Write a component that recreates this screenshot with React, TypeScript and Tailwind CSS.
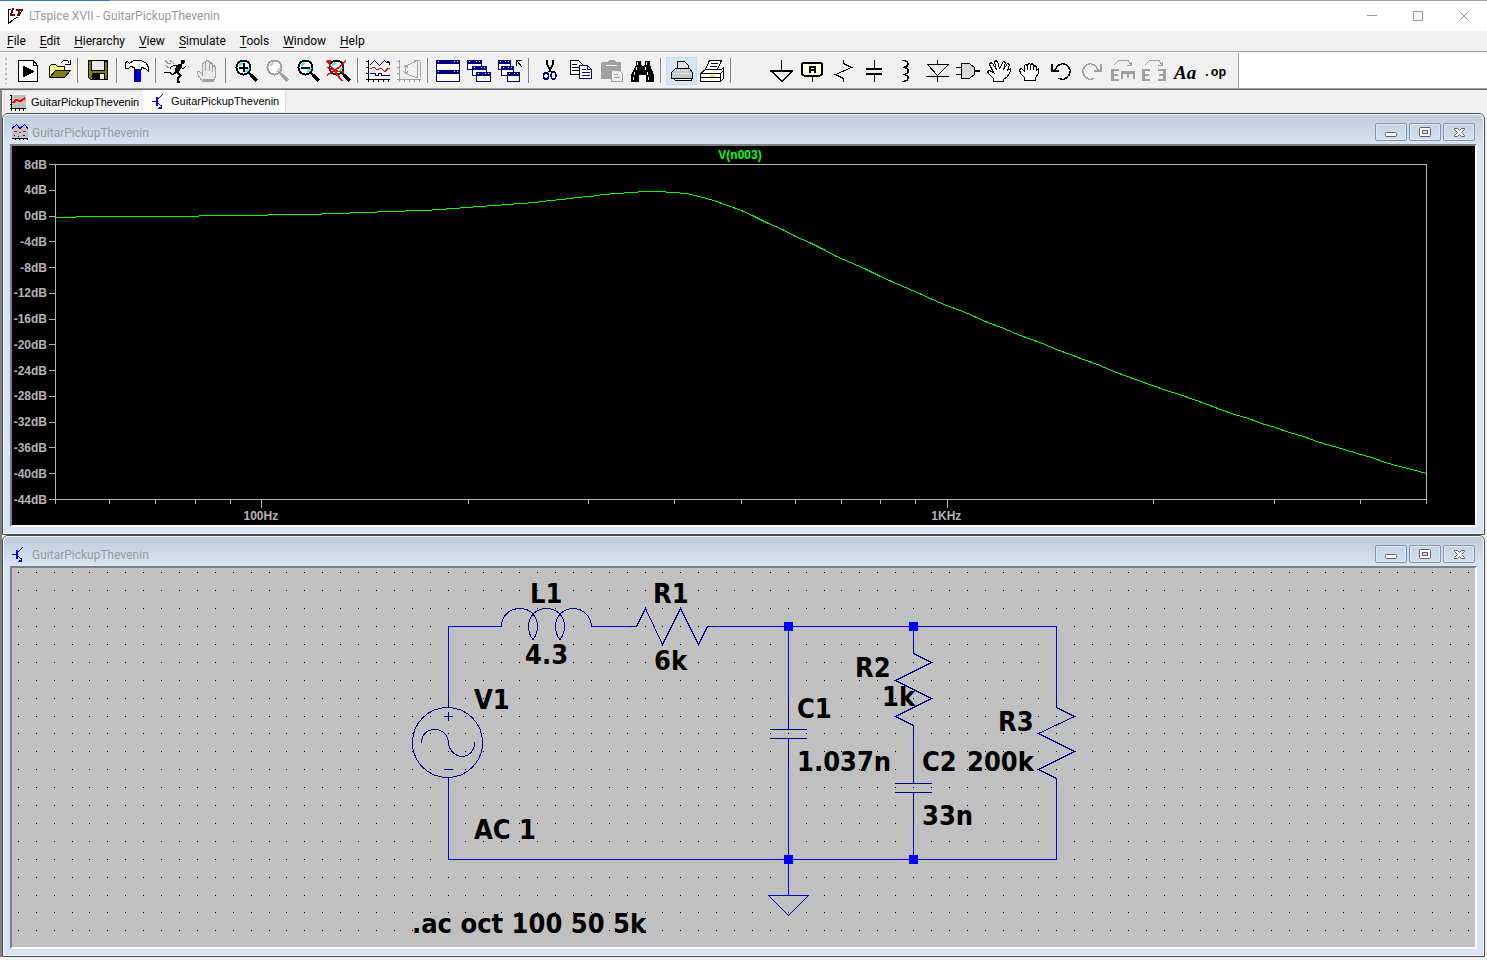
import { Fragment, type ReactNode } from "react";

const UI_FONT = "font-['Roboto','Noto_Sans',sans-serif]";

const MENUS = ["File", "Edit", "Hierarchy", "View", "Simulate", "Tools", "Window", "Help"];

type Tool = { name: string; art: ReactNode; active?: boolean };

const Lens = ({ children, color = "#000", glint = "#00ffff" }: { children?: ReactNode; color?: string; glint?: string }) => (
  <>
    <circle cx="12.5" cy="10.5" r="7" fill="#fff" stroke={color} strokeWidth="2" />
    <path d="M8 9l3-3M15 15l3-4" stroke={glint} strokeWidth="2" />
    <path d="M18 16l3 3" stroke={color} strokeWidth="2" />
    <path d="M20 18l6 6" stroke={color} strokeWidth="4" />
    {children}
  </>
);

const MiniWindow = ({ x, y, w = 15, h = 10 }: { x: number; y: number; w?: number; h?: number }) => (
  <>
    <rect x={x + 0.5} y={y + 0.5} width={w - 1} height={h - 1} fill="#fff" stroke="#000080" />
    <rect x={x} y={y} width={w} height="4" fill="#000080" />
    <path d={`M${x + 2} ${y + 1.5}h1M${x + w - 6} ${y + 1.5}h1M${x + w - 3} ${y + 1.5}h1`} stroke="#fff" />
  </>
);

const fileTools: Tool[][] = [
  [
    {
      name: "Run",
      art: (
        <>
          <path d="M5.5 3.5H20.5L24.5 8.5V24.5H5.5z" fill="#fff" stroke="#000" />
          <path d="M20.5 4V8.5H24" fill="none" stroke="#000" />
          <path d="M10 8.5L21.5 14.5L10 20.5z" />
        </>
      ),
    },
    {
      name: "Open",
      art: (
        <>
          <path d="M5.5 20.5V9.5L7.5 7.5H11.5L13.5 9.5H20.5V13.5" fill="#ffff80" stroke="#000" />
          <path d="M5.5 20.5L11.5 13.5H26.5L20.5 20.5z" fill="#808000" stroke="#000" />
          <path d="M16.5 6.5L19.5 3.5H23.5L25.5 6.5M21 7.5H26.5V3" fill="none" stroke="#000" />
        </>
      ),
    },
  ],
  [
    {
      name: "Save",
      art: (
        <>
          <path d="M5.5 3.5H24.5V22.5H7.5L5.5 20.5z" fill="#808000" stroke="#000" strokeWidth="1" />
          <rect x="9" y="4" width="12" height="9" fill="#e8e8e8" />
          <path d="M8.5 4V13.5H21.5V4M21 4.5h3" fill="none" stroke="#000" />
          <rect x="9" y="16" width="13" height="7" />
          <rect x="17" y="17" width="4" height="5" fill="#f0f0f0" />
        </>
      ),
    },
  ],
  [
    {
      name: "Control Panel",
      art: (
        <>
          <path d="M12 11h7v14h-7z" fill="#0000ff" />
          <path d="M12 11h3v14h-3z" fill="#000080" />
          <path d="M3.5 5.5L5.5 4.5L7.5 6.5L11.5 3.5H19.5L24.5 6.5L26.5 10.5V14.5L23.5 11.5L19.5 10.5V12.5H12.5V10.5L8.5 9.5L6.5 11.5H3.5z" fill="#fff" stroke="#000" />
        </>
      ),
    },
  ],
  [
    {
      name: "Simulate",
      art: (
        <>
          <path d="M20 3h4v3h-1v1h-3z" />
          <path d="M17 7h4v3l-2 3l-1 3h-4v-4z" />
          <path d="M18 8.5H12.500L9.500 10.500V12M20 10.500L22 11.500L25 9.500" fill="none" stroke="#000" />
          <path d="M15 15.500L11.500 17.500L8.500 15.500H3" fill="none" stroke="#000" strokeWidth="1.500" />
          <path d="M15.500 15L19.500 18.500L16.500 22V24.500H19" fill="none" stroke="#000" strokeWidth="2" />
          <path d="M4 3.500L7 6.500L10 7M9 3.500L13 6.500M4 8.500L8 11" fill="none" stroke="#909090" />
        </>
      ),
    },
    {
      name: "Halt",
      art: (
        <>
          <path
            d="M10.5 24.5L5.5 17.5V14.5H7.5L10.5 17.5V6.500L12.500 5.500L13.500 6.500V4.500L15.500 3.500L17.500 4.500V6.500L19.500 5.500L20.500 7.500V9.500L22.500 8.500L23.500 10.500V19.500L21.500 24.500z"
            fill="#e8e8e8"
            stroke="#a0a0a0"
            strokeWidth="1"
          />
          <path d="M13.500 6V14M17.500 6V14M20.500 8V15M10.500 17V19" stroke="#a0a0a0" />
          <path d="M11 22h11v3H11z" fill="#a0a0a0" />
        </>
      ),
    },
  ],
  [
    {
      name: "Zoom to area",
      art: (
        <Lens>
          <path d="M8 10.5h9M12.5 6v9" stroke="#000" strokeWidth="2" />
        </Lens>
      ),
    },
    { name: "Pan", art: <Lens color="#a0a0a0" glint="#c8c8c8" /> },
    {
      name: "Zoom back",
      art: (
        <Lens>
          <path d="M8 10.5h9" stroke="#000" strokeWidth="2" />
        </Lens>
      ),
    },
    {
      name: "Zoom full extents",
      art: (
        <Lens>
          <path d="M3 4L18 24M22 4L14 11L3 18M3 10.500L12 14L20 15" fill="none" stroke="#ff0000" strokeWidth="1.500" />
          <path d="M3 3h4v3H3z" fill="#ff0000" />
        </Lens>
      ),
    },
  ],
  [
    {
      name: "Autorange",
      art: (
        <>
          <path d="M5.5 3V24.5M3 22.5H27M3 4.5h3M3 10.5h3M3 16.5h3M10.5 22v3M15.5 22v3M20.5 22v3M25.5 22v3" stroke="#000" fill="none" />
          <path d="M6.500 8.500L11.500 3.500L16.500 8.500L21.500 3.500L23.500 5.500L25.500 4.500L27 7.500" fill="none" stroke="#000080" />
          <path d="M7 11.500L11 10.500L14 12.500L18 11.500L22 14.500L25 11.500H27" fill="none" stroke="#ff0000" />
          <path d="M7 16.500H12.500V18.500H15.500V16.500H18.500V18.500H27" fill="none" stroke="#000080" />
        </>
      ),
    },
    {
      name: "Setup plot",
      art: (
        <path
          d="M5.500 3V24.500M3 22.500H27M3 4.500h3M3 10.500h3M3 16.500h3M10.500 22v3M15.500 22v3M20.500 22v3M25.500 22v3M23.500 4V20.500M11.500 8V17M22 4.500L16.500 6.500L11.500 9.500M12 16.500L16.500 18.500L23 20.500M20 3.500H25.500M9.500 10.500L11.500 8.500L14 10.500M9.500 14.500L11.500 16.500L14 14.500M26.500 5V20"
          fill="none"
          stroke="#a0a0a0"
        />
      ),
    },
  ],
  [
    {
      name: "Tile windows",
      art: (
        <>
          <MiniWindow x={3} y={3} w={24} h={11} />
          <MiniWindow x={3} y={13} w={24} h={12} />
        </>
      ),
    },
    {
      name: "Cascade windows",
      art: (
        <>
          <MiniWindow x={3} y={3} />
          <MiniWindow x={8} y={9} />
          <MiniWindow x={12} y={15} />
        </>
      ),
    },
    {
      name: "Close all",
      art: (
        <>
          <MiniWindow x={3} y={3} w={13} />
          <MiniWindow x={6} y={9} w={13} />
          <MiniWindow x={12} y={15} w={13} />
          <path d="M21.5 9V3.5H27M22 4L27 10" fill="none" stroke="#000" strokeWidth="1" />
        </>
      ),
    },
  ],
  [
    {
      name: "Cut",
      art: (
        <>
          <path d="M13 3V7L17 15M19 3V7L15 15" fill="none" stroke="#000" strokeWidth="1.500" />
          <ellipse cx="12" cy="19" rx="2.5" ry="3.5" fill="none" stroke="#000080" strokeWidth="1.500" />
          <ellipse cx="19.5" cy="18.5" rx="2.5" ry="3.5" fill="none" stroke="#000080" strokeWidth="1.500" />
        </>
      ),
    },
    {
      name: "Copy",
      art: (
        <>
          <path d="M5.5 3.5H13.5L17.5 7.5V17.5H5.5z" fill="#fff" stroke="#000" />
          <path d="M7 7.5h5M7 10.5h8M7 13.5h8" stroke="#000" />
          <path d="M14.5 8.5H22.5L26.5 12.5V21.5H14.5z" fill="#fff" stroke="#000080" />
          <path d="M22.5 9V12.5H26M17 12.5h4M17 15.5h8M17 18.5h8" stroke="#000080" fill="none" />
        </>
      ),
    },
    {
      name: "Paste",
      art: (
        <>
          <path d="M5 6L7 5H11L13 3H18L20 5H24L25 6V22H5z" fill="#a0a0a0" />
          <path d="M10 8.5H21" stroke="#f0f0f0" />
          <path d="M15.5 13.5H23.5L26.5 16.5V24.5H15.5z" fill="#f0f0f0" stroke="#a0a0a0" />
          <path d="M18 17.5h4M18 20.5h6" stroke="#a0a0a0" />
        </>
      ),
    },
    {
      name: "Find",
      art: (
        <>
          <path d="M9 4h5v3l1 2h2l1-2V4h5v4l4 10v7h-8v-7h-7v7H4v-7L9 8z" />
          <path d="M10.5 5v3M19.5 5v3M9.5 10v3M18.5 10v3M7.5 15v3M20.5 15v3M6.5 20v3M21.5 20v3" stroke="#f0f0f0" />
        </>
      ),
    },
  ],
  [
    {
      name: "Print",
      active: true,
      art: (
        <>
          <path d="M11.5 13.5V4.5H18.5L22.5 8.5V13.5" fill="#e0e0e0" stroke="#000" />
          <path d="M5.5 21.5V15.5L9.5 11.5H23.5L26.5 15.5V21.5z" fill="#c8c8c8" stroke="#000" />
          <path d="M7.5 21.5H25.5V23.5H9.5z" fill="#fff" stroke="#000" />
          <path d="M9 13.5h14M8 16.5h17" stroke="#fff" strokeDasharray="1 1" />
        </>
      ),
    },
    {
      name: "Print setup",
      art: (
        <>
          <path d="M3.5 16.5L8.5 12.5H24.5L26.5 10.5V21.5L23.5 24.5H3.5z" fill="#fff" stroke="#000" />
          <path d="M8.5 12.5L12.5 3.5H24.5L20.5 12.5z" fill="#fff" stroke="#000" />
          <path d="M14 6.5h7M13 9.5h7M4 16.5H23.5V24M4 20.5H23M23.5 16.5L26.5 13.5" stroke="#000" fill="none" />
          <path d="M13 18.5h5" stroke="#e8e800" strokeWidth="2" />
        </>
      ),
    },
  ],
];

const editTools: Tool[] = [
  {
    name: "Ground",
    art: (
      <>
        <path d="M14.5 3V13.5M4.500 14L15 24.500L25.500 14" fill="none" stroke="#000" />
        <path d="M3 13h23v2H3z" />
      </>
    ),
  },
  {
    name: "Label Net",
    art: (
      <>
        <rect x="4" y="5.5" width="20" height="13" rx="2" fill="#ffffe0" stroke="#000" strokeWidth="2" />
        <path d="M14.5 19v6" stroke="#000" />
        <path d="M12 16V9.500H17V16M12 13h5" fill="none" stroke="#000" strokeWidth="2" />
      </>
    ),
  },
  {
    name: "Resistor",
    art: <path d="M14.500 3V6.500L22.500 10.500L6.500 17.500L14.500 21.500V25" fill="none" stroke="#000" />,
  },
  {
    name: "Capacitor",
    art: (
      <>
        <path d="M14.500 3V11M14.500 17V25" stroke="#000" />
        <path d="M6 12H22M6 17H22" stroke="#000" strokeWidth="2" />
      </>
    ),
  },
  {
    name: "Inductor",
    art: <path d="M11 3.500C18.500 3.500 19 9.500 12 10.500C19 10.500 19 17 12 17.500C19 17.500 19 24.500 11 24.500" fill="none" stroke="#000" strokeWidth="1.500" />,
  },
  {
    name: "Diode",
    art: <path d="M15.5 3V8M5.5 7.5H26.5L15.5 18.5zM4 19.5H27M15.5 19V25" fill="none" stroke="#000" strokeWidth="1" />,
  },
  {
    name: "Component",
    art: (
      <>
        <path d="M8.5 6.5H16L21 10L22 14L21 18L16 21.5H8.5z" fill="#d8d8d8" stroke="#000" />
        <path d="M3 10.5H8M3 17.5H8" stroke="#000" />
        <path d="M22 14H27" stroke="#000" strokeWidth="2" />
      </>
    ),
  },
  {
    name: "Move",
    art: (
      <path
        d="M9.500 24.500V21.500L4.500 16.500L3.500 14.500L5.500 13.500L9.500 15.500L5.500 7.500L6.500 5.500L8.500 6.500L12.500 12.500L10.500 5.500L11.500 3.500L13.500 4.500L15.500 11.500L19.500 4.500L21.500 5.500L19.500 12.500L23.500 6.500L25.500 7.500L23.500 13.500L26.500 11.500V14.500L23.500 19.500L19.500 22.500V24.500z"
        fill="#fff"
        stroke="#000"
      />
    ),
  },
  {
    name: "Drag",
    art: (
      <path
        d="M9.500 23.500V20.500L5.500 16.500L4.500 12.500L6.500 11.500L9.500 14.500V8.500L10.500 7.500L12.500 8.500V12.500V7.500L14.500 6.500L15.500 7.500V12.500V7.500L17.500 6.500L18.500 8.500V12.500V9.500L20.500 8.500L21.500 10.500V13.500L23.500 11.500V16.500L20.500 20.500V23.500z"
        fill="#fff"
        stroke="#000"
      />
    ),
  },
  {
    name: "Undo",
    art: (
      <>
        <path d="M8 14L12 8.500L16.500 6.500L21.500 8.500L24.500 13.500L22.500 19.500L17.500 22.500L12.500 21.500" fill="none" stroke="#000" strokeWidth="1.500" />
        <path d="M5 7h2v6h6v2H5z" />
      </>
    ),
  },
  {
    name: "Redo",
    art: (
      <>
        <path d="M22 14L18 8.500L13.500 6.500L8.500 8.500L5.500 13.500L7.500 19.500L12.500 22.500L17.500 21.500" fill="none" stroke="#a0a0a0" strokeWidth="1.500" />
        <path d="M25 7h-2v6h-6v2h8z" fill="#a0a0a0" />
      </>
    ),
  },
  {
    name: "Rotate",
    art: (
      <>
        <path d="M6 8L10.500 3.500H20L23 8M23.5 5V8.5H19" fill="none" stroke="#a0a0a0" />
        <path d="M3 12h8v2H6v3h4v2H6v3h5v2H3zM13 14h14v8h-2v-5h-4v4h-2v-4h-4v5h-2z" fill="#a0a0a0" />
      </>
    ),
  },
  {
    name: "Mirror",
    art: (
      <>
        <path d="M6 8L10.500 3.500H20L23 8M23.5 5V8.5H19" fill="none" stroke="#a0a0a0" />
        <path d="M3 12h8v2H6v3h4v2H6v3h5v2H3zM27 12h-8v2h5v3h-4v2h4v3h-5v2h8z" fill="#a0a0a0" />
      </>
    ),
  },
  {
    name: "Text",
    art: (
      <text x="4" y="22" fontFamily="Liberation Serif, serif" fontSize="19" fontWeight="bold" fontStyle="italic">
        Aa
      </text>
    ),
  },
  {
    name: "SPICE Directive",
    art: (
      <text x="2" y="19" fontFamily="Liberation Mono, monospace" fontSize="13" fontWeight="bold">
        .op
      </text>
    ),
  },
];

function ToolButton({ tool }: { tool: Tool }) {
  return (
    <button
      aria-label={tool.name}
      className={tool.active ? "h-7 w-[31px] bg-[#d8e6f2] outline outline-1 -outline-offset-1 outline-[#c0dcf3]" : "h-7 w-[31px]"}
    >
      <svg viewBox="0 0 31 28" className="h-7 w-[31px]" shapeRendering="crispEdges">
        {tool.art}
      </svg>
    </button>
  );
}

function Toolbar() {
  return (
    <div className="flex h-[35px] bg-white">
      <div className="flex items-center border-r border-[#a0a0a0] bg-[#f0f0f0] pr-[6px] pl-[5px]">
        <div className="mr-[6px] h-[26px] w-[2px] bg-[repeating-linear-gradient(#b8b8b8_0_2px,transparent_2px_5px)]" />
        {fileTools.map((group) => (
          <Fragment key={group[0].name}>
            {group.map((tool) => (
              <ToolButton key={tool.name} tool={tool} />
            ))}
            <div className="mx-[2px] h-[25px] w-1 border-l border-[#808080]" />
          </Fragment>
        ))}
        <div className="w-[31px]" />
        {editTools.map((tool) => (
          <ToolButton key={tool.name} tool={tool} />
        ))}
      </div>
    </div>
  );
}

const PlotIcon = () => (
  <svg viewBox="0 0 16 16" className="size-4" shapeRendering="crispEdges">
    <rect x="2" width="14" height="13" fill="#c0c0c0" />
    <path d="M1.5 0V16M0 13.5H16M0 0.500h2M0 4.5h2M0 9.5h2M5.5 13v3M9.5 13v3M13.5 13v3" stroke="#000" />
    <path d="M3 8L6 4.500L10 6.500L15 3" fill="none" stroke="#ff0000" strokeWidth="2" />
  </svg>
);

const SchematicIcon = () => (
  <svg viewBox="0 0 16 16" className="size-4" shapeRendering="crispEdges">
    <path d="M0 8.500H4" stroke="#0000ff" />
    <path d="M5 4V13" stroke="#0000ff" strokeWidth="2" />
    <path d="M5.500 6.500L10.500 1.500M5.500 9.500L10.500 14.500" stroke="#0000ff" />
    <path d="M10 12v4H6v-1h1v-1h2v-2z" fill="#0000ff" />
  </svg>
);

const WaveIcon = () => (
  <svg viewBox="0 0 16 16" className="size-4" shapeRendering="crispEdges">
    <rect width="16" height="14" fill="#c0c0c0" />
    <path d="M0 4.500L4.500 0.500L8 4.500L12.500 0.500L16 4.500" fill="none" stroke="#0000ff" />
    <path d="M2 7.500h3M7 8.500h2M11 7.500h3" stroke="#ff0000" />
    <path d="M2 11.500h1M6 12.500h1M11 11.500h2" stroke="#0000ff" />
    <path d="M0 14.500H16M3.500 15v1M7.500 15v1M11.500 15v1M15.500 15v1" stroke="#000" />
  </svg>
);

const captionGlyphs = {
  Minimize: <rect x="9.500" y="8.5" width="11" height="4" rx="1" fill="#fff" stroke="#5a6070" />,
  Restore: (
    <>
      <rect x="9.500" y="3.500" width="11" height="9" rx="1" fill="#fff" stroke="#5a6070" />
      <rect x="12.500" y="6.500" width="5" height="3" fill="#d0dcea" stroke="#5a6070" />
    </>
  ),
  Close: (
    <path d="M10.500 4.500H13.500L15.500 6.500L17.500 4.500H20.500V5.500L17.500 8.500L20.500 11.500V12.500H17.500L15.500 10.500L13.500 12.500H10.500V11.500L13.500 8.500L10.500 5.500z" fill="#fff" stroke="#5a6070" />
  ),
};

function ChildWindow({ title, icon, children }: { title: string; icon: ReactNode; children: ReactNode }) {
  return (
    <section className="rounded-t-[6px] border border-[#484c50]">
      <div className="rounded-t-[5px] border border-[#f4f8fc] bg-[#d7e4f2] bg-[linear-gradient(#bfcddb,#d7e4f2_29px)] px-[6px] pb-[6px]">
        <header className="flex h-[29px] items-start pr-[2px] pl-[2px]">
          <span className="mt-[9px]">{icon}</span>
          <h2 className={`mt-[10px] ml-1 grow text-xs leading-4 text-[#999] ${UI_FONT}`}>{title}</h2>
          <div className="mt-2 flex gap-[2px]">
            {Object.entries(captionGlyphs).map(([label, glyph]) => (
              <button key={label} aria-label={label} className="h-[18px] w-8 rounded-[2px] border border-[#8494b0] bg-[linear-gradient(#c6d4e3,#d3e0ee)] shadow-[inset_0_0_0_1px_#dde8f4]">
                <svg viewBox="0 0 30 16" className="h-4 w-[30px]">
                  {glyph}
                </svg>
              </button>
            ))}
          </div>
        </header>
        <div className="border-2 border-t-[#808080] border-r-white border-b-white border-l-[#808080]">{children}</div>
      </div>
    </section>
  );
}

// Circuit values from the schematic, the output is the node over C1
const L1 = 4.3;
const R1 = 6e3;
const C1 = 1.037e-9;
const R2 = 1e3;
const C2 = 33e-9;
const R3 = 200e3;

function gainDb(freq: number) {
  const w = 2 * Math.PI * freq;
  const x2 = -1 / (w * C2);
  const mag = R2 * R2 + x2 * x2;
  const g = R2 / mag + 1 / R3;
  const b = -x2 / mag + w * C1;
  // H = 1 / (1 + Zs * Y)
  const re = 1 + R1 * g - w * L1 * b;
  const im = R1 * b + w * L1 * g;
  return -10 * Math.log10(re * re + im * im);
}

const PLOT = { left: 43.5, right: 1414.5, top: 18.5, bottom: 353.5 };
const freqX = (f: number) => PLOT.left + ((PLOT.right - PLOT.left) * Math.log10(f / 50)) / 2;
const dbY = (db: number) => PLOT.top + ((8 - db) * (PLOT.bottom - PLOT.top)) / 52;
const snap = (v: number) => Math.floor(v) + 0.5;

const DB_STEPS = Array.from({ length: 14 }, (_, i) => 8 - i * 4);
const FREQ_TICKS = [50, 60, 70, 80, 90, 100, 200, 300, 400, 500, 600, 700, 800, 900, 1000, 2000, 3000, 4000, 5000];
const TRACE = Array.from({ length: 101 }, (_, i) => 50 * 10 ** (i / 50))
  .map((f) => `${snap(freqX(f))},${snap(dbY(gainDb(f)))}`)
  .join(" ");

function BodePlot() {
  return (
    <svg viewBox="0 0 1463 379" className="block w-full bg-black font-['Liberation_Sans',sans-serif] text-xs font-bold">
      <g fill="none" stroke="#b4b4b4" shapeRendering="crispEdges">
        <rect x={PLOT.left} y={PLOT.top} width={PLOT.right - PLOT.left} height={PLOT.bottom - PLOT.top} />
        {DB_STEPS.map((db) => (
          <path key={db} d={`M${PLOT.left - 7} ${dbY(db)}h7`} />
        ))}
        {FREQ_TICKS.map((f) => (
          <path key={f} d={`M${freqX(f)} ${PLOT.bottom}v${f === 100 || f === 1000 ? 8 : 4}`} />
        ))}
      </g>
      {DB_STEPS.map((db) => (
        <text key={db} x="35" y={Math.round(dbY(db) + 4)} textAnchor="end" fill="#b4b4b4">
          {db}dB
        </text>
      ))}
      <text x={freqX(100) - 1} y="374" textAnchor="middle" fill="#b4b4b4">100Hz</text>
      <text x={freqX(1000) - 1} y="374" textAnchor="middle" fill="#b4b4b4">1KHz</text>
      <text x="728" y="13" textAnchor="middle" fill="#00ff00">V(n003)</text>
      <polyline points={TRACE} fill="none" stroke="#00ff00" shapeRendering="crispEdges" />
    </svg>
  );
}

const GRID = 17.905;
const DOTS = Array.from({ length: 21 }, (_, row) =>
  Array.from({ length: 82 }, (_, col) => `M${Math.floor(6.33 + col * GRID)} ${Math.floor(4.8 + row * GRID)}h1v1h-1z`).join("")
).join("");

const LABELS = [
  { x: 518, y: 35, text: "L1" },
  { x: 641, y: 35, text: "R1" },
  { x: 513, y: 96, text: "4.3" },
  { x: 642, y: 102, text: "6k" },
  { x: 462, y: 141, text: "V1" },
  { x: 462, y: 271, text: "AC 1" },
  { x: 843, y: 109, text: "R2" },
  { x: 870, y: 138, text: "1k" },
  { x: 785, y: 150, text: "C1" },
  { x: 785, y: 203, text: "1.037n" },
  { x: 910, y: 203, text: "C2" },
  { x: 955, y: 203, text: "200k" },
  { x: 910, y: 257, text: "33n" },
  { x: 986, y: 163, text: "R3" },
  { x: 400, y: 365, text: ".ac oct 100 50 5k" },
];

function Schematic() {
  return (
    <svg viewBox="0 0 1463 379" className="block w-full bg-[#c0c0c0]">
      <path d={DOTS} shapeRendering="crispEdges" />
      <g fill="none" stroke="#0000ff" shapeRendering="crispEdges">
        <path d="M436.5 139.500V58.500H489.500M579.500 58.500H624.500M695.500 58.500H1044.500V139.500" />
        <path d="M436.5 209.500V291.500H1044.500V210.500M776.500 58.500V161.500M776.500 170.500V327.500" />
        <path d="M901.500 58.500V85.500M901.500 157.500V215.500M901.500 224.500V291.500" />
      </g>
      <g fill="none" stroke="#000080" shapeRendering="crispEdges">
        <path d="M489.500 58.500C490 46 499 40.500 508 40.500C519 40.500 525.500 49 525.500 58.500C525.500 65 523 69 521 71.500C518 68 516.500 65 516.500 58.500C516.500 48 524 40.500 534 40.500C545 40.500 552.500 48 552.500 58.500C552.500 65 550 69 548 71.500C545 68 543.500 65 543.500 58.500C543.500 48 551 40.500 561 40.500C571 40.500 579 48 579.500 58.500" />
        <path d="M615 58.500H624.500L633.500 40.500L650.500 76.500L668.500 40.500L686.500 76.500L695.500 58.500H704" />
        <circle cx="435.500" cy="174.500" r="35" />
        <path d="M436.5 130V139.500M436.5 209.500V218M436.500 143.500V153M431.500 148.500H441M431.500 201.500H441" />
        <path d="M409.500 175C409.500 157 435 157 436.500 174.500C438 193 463 193 462.500 174" />
        <path d="M776.500 130V161.500M758 161.500H795M758 170.500H795M776.500 170.500V201" />
        <path d="M901.500 77V85.500L919.500 94.500L883.500 112.500L919.500 130.500L883.500 148.500L901.500 157.500V166" />
        <path d="M901.500 184V215.500M883 215.500H920M883 224.500H920M901.500 224.500V255" />
        <path d="M1044.500 130V139.500L1062.500 148.500L1026.500 165.500L1062.500 183.500L1026.500 201.500L1044.500 210.500V218" />
      </g>
      <path d="M756.500 327.500H796.500L776.500 347.500z" fill="none" stroke="#0000c0" shapeRendering="crispEdges" />
      <path d="M772 54h9v9h-9zM897 54h9v9h-9zM772 287h9v9h-9zM897 287h9v9h-9z" fill="#0000ff" />
      <g className="font-['DejaVu_Sans_Condensed','DejaVu_Sans',sans-serif] text-[27px] font-bold">
        {LABELS.map((label) => (
          <text key={label.text} x={label.x} y={label.y}>
            {label.text}
          </text>
        ))}
      </g>
    </svg>
  );
}

export default function App() {
  return (
    <div className="bg-[#f0f0f0] text-black">
      <div className="h-px bg-[linear-gradient(90deg,#2b7aa8_110px,#a0a0a0_110px)]" />
      <header className="flex h-[30px] items-center bg-white pl-[7px]">
        <svg viewBox="0 0 16 16" className="size-4" shapeRendering="crispEdges">
          <path d="M1.500 1V15.500L6.500 11.500L11.500 8.500L15.500 1.500M1.500 1.500H4" fill="none" stroke="#000" />
          <path d="M6 0L4 7H8M9 1.500H16M13 1L11 8" fill="none" stroke="#800000" strokeWidth="2" />
        </svg>
        <h1 className={`ml-[6px] grow text-xs text-[#999] ${UI_FONT}`}>LTspice XVII - GuitarPickupThevenin</h1>
        <div className="flex">
          {[
            { label: "Minimize", d: "M0 4.500H10" },
            { label: "Maximize", d: "M0.500 0.500H9.500V9.500H0.500z" },
            { label: "Close", d: "M0.500 0.500L9.500 9.500M9.500 0.500L0.500 9.500" },
          ].map(({ label, d }) => (
            <button key={label} aria-label={label} className="flex w-[46px] justify-center">
              <svg viewBox="0 0 10 10" className="size-[10px]" fill="none" stroke="#999">
                <path d={d} />
              </svg>
            </button>
          ))}
        </div>
      </header>
      <nav className={`flex h-5 items-center text-xs ${UI_FONT}`}>
        {MENUS.map((menu) => (
          <button key={menu} className="px-[7px]">
            <span className="underline underline-offset-2">{menu[0]}</span>
            {menu.slice(1)}
          </button>
        ))}
      </nav>
      <div className="h-[2px] border-t border-[#a0a0a0] bg-white" />
      <Toolbar />
      <main className="border-t border-[#a0a0a0]">
        <div className="border-t border-l-2 border-t-[#696969] border-l-[#808080] pr-[2px]">
          <div role="tablist" className="flex h-[23px] font-['Liberation_Sans',sans-serif] text-[11px]">
            <button role="tab" className="ml-[2px] flex h-[22px] w-[139px] items-center gap-[5px] border-t border-l border-[#ddd] pt-[2px] pl-[5px]">
              <PlotIcon />
              GuitarPickupThevenin
            </button>
            <button role="tab" aria-selected="true" className="flex h-[22px] w-[143px] items-center gap-[3px] border-r border-[#ddd] bg-white pl-[9px]">
              <SchematicIcon />
              GuitarPickupThevenin
            </button>
          </div>
          <ChildWindow title="GuitarPickupThevenin" icon={<WaveIcon />}>
            <BodePlot />
          </ChildWindow>
          <ChildWindow title="GuitarPickupThevenin" icon={<SchematicIcon />}>
            <Schematic />
          </ChildWindow>
        </div>
        <div className="h-[3px] bg-[#f4eef0]" />
      </main>
    </div>
  );
}
